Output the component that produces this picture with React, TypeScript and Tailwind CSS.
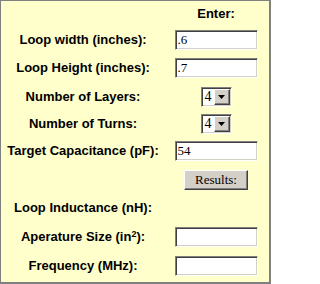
import React from 'react'

const sans = "font-['Liberation_Sans',Arial,sans-serif]"
const serif = "font-['Liberation_Serif','Times_New_Roman',serif]"

function TextBox({ value = '' }: { value?: string }) {
  return (
    <input
      type="text"
      defaultValue={value}
      className={`w-[83px] h-[20px] bg-white border border-t-[#808080] border-l-[#808080] border-b-white border-r-white shadow-[inset_1px_1px_0_#404040,inset_-1px_-1px_0_#d4d0c8] px-[2px] ${serif} text-[13px] text-black outline-none`}
    />
  )
}

function Dropdown({ value }: { value: string }) {
  return (
    <div className="flex items-stretch w-[31px] h-[20px] p-[1px] bg-white border border-t-[#808080] border-l-[#808080] border-b-white border-r-white shadow-[inset_1px_1px_0_#404040,inset_-1px_-1px_0_#d4d0c8]">
      <span className={`flex-1 flex items-center pl-[2px] ${serif} text-[14px] leading-none text-black`}>
        {value}
      </span>
      {/* arrow button */}
      <span className="w-[16px] flex items-center justify-center bg-[#d4d0c8] border border-t-white border-l-white border-b-[#404040] border-r-[#404040] shadow-[inset_-1px_-1px_0_#808080]">
        <svg width="7" height="4" viewBox="0 0 7 4">
          <polygon points="0,0 7,0 3.5,4" fill="#000" />
        </svg>
      </span>
    </div>
  )
}

function Label({ children }: { children: React.ReactNode }) {
  return (
    <div className="flex items-center justify-center whitespace-nowrap text-[13px] font-bold text-black">
      {children}
    </div>
  )
}

function Cell({ children }: { children?: React.ReactNode }) {
  return <div className="flex items-center justify-center">{children}</div>
}

export default function App() {
  return (
    <div className={`w-[271px] h-[284px] bg-[#ffffcc] border-t border-l border-r-2 border-b-2 border-[#808080] ${sans}`}>
      <div className="grid grid-cols-[164px_102px] grid-rows-[26px_26px_30px_27px_27px_28px_29px_28px_30px_28px]">
        <div />
        <Label>Enter:</Label>

        <Label>Loop width (inches):</Label>
        <Cell><TextBox value=".6" /></Cell>

        <Label>Loop Height (inches):</Label>
        <Cell><TextBox value=".7" /></Cell>

        <Label>Number of Layers:</Label>
        <Cell><Dropdown value="4" /></Cell>

        <Label>Number of Turns:</Label>
        <Cell><Dropdown value="4" /></Cell>

        <Label>Target Capacitance (pF):</Label>
        <Cell><TextBox value="54" /></Cell>

        <div />
        <Cell>
          <button
            type="button"
            className={`w-[64px] h-[20px] bg-[#d4d0c8] border border-t-white border-l-white border-b-[#404040] border-r-[#404040] shadow-[inset_-1px_-1px_0_#808080] ${serif} text-[13px] leading-none text-black`}
          >
            Results:
          </button>
        </Cell>

        <Label>Loop Inductance (nH):</Label>
        <Cell />

        <Label>
          <span>
            Aperature Size (in<sup className="text-[9px]">2</sup>):
          </span>
        </Label>
        <Cell><TextBox /></Cell>

        <Label>Frequency (MHz):</Label>
        <Cell><TextBox /></Cell>
      </div>
    </div>
  )
}
